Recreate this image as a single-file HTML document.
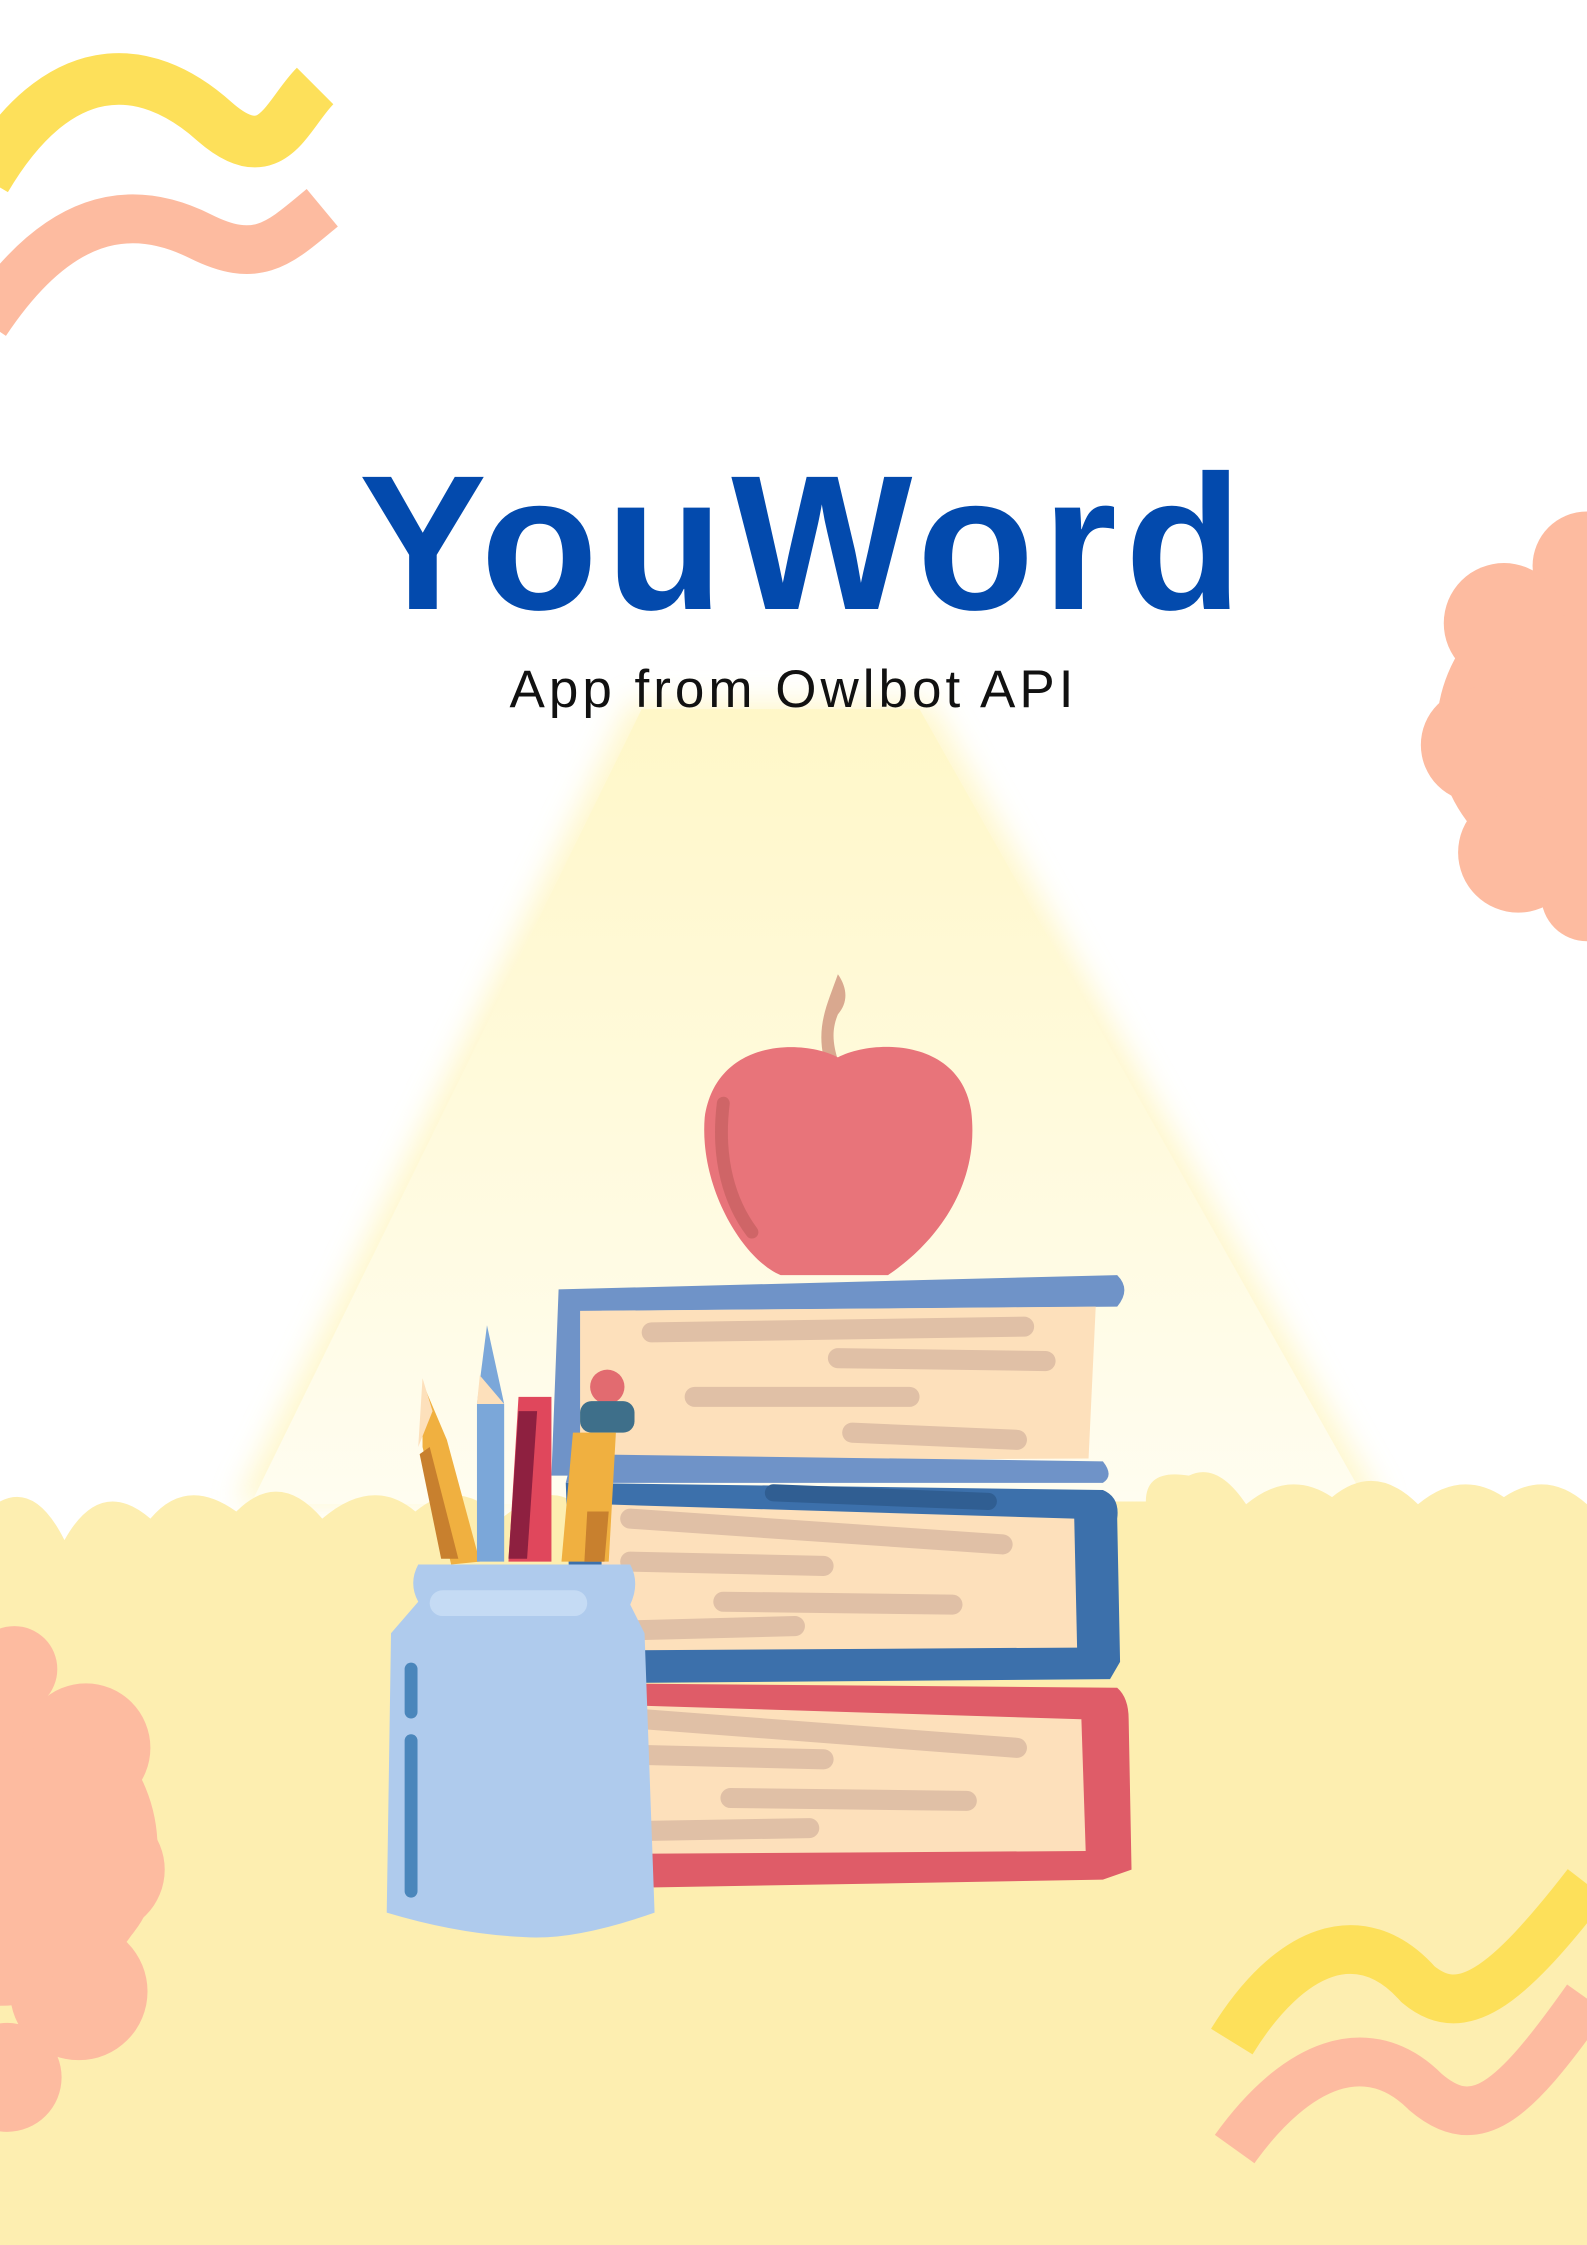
<!DOCTYPE html>
<html><head><meta charset="utf-8"><style>
html,body{margin:0;padding:0;background:#fff}
.wrap{position:relative;width:1587px;height:2245px;overflow:hidden;background:#fff}
svg{position:absolute;left:0;top:0}
.t{position:absolute;left:0;width:1587px;text-align:center;font-family:"Liberation Sans",sans-serif;margin:0;box-sizing:border-box}
.title{top:448px;font-size:192px;font-weight:bold;color:#034aad;letter-spacing:8px;line-height:190px;padding-left:22px}
.sub{top:660px;font-size:53px;color:#111;letter-spacing:4px;line-height:60px}
</style></head><body><div class="wrap">
<svg width="1587" height="2245" viewBox="0 0 1108 1567" preserveAspectRatio="none">
<defs>
<linearGradient id="beam" x1="0" y1="0" x2="0" y2="1">
<stop offset="0" stop-color="#fff7c8"/><stop offset="1" stop-color="#fffdf0"/></linearGradient>
<filter id="bl"><feGaussianBlur stdDeviation="10"/></filter>
</defs>
<polygon points="440,490 650,490 965,1050 165,1050" fill="#fff4b8" filter="url(#bl)" opacity=".7"/>
<polygon points="448,495 642,495 955,1050 175,1050" fill="url(#beam)"/>
<path d="M0,1048 Q25,1035 45,1075 Q70,1030 105,1060 Q130,1030 165,1055 Q195,1025 225,1060 Q260,1030 290,1055 Q320,1030 350,1060 Q380,1035 400,1048 L800,1048 Q800,1025 830,1030 Q850,1020 870,1050 Q900,1025 930,1045 Q960,1020 990,1050 Q1020,1025 1050,1045 Q1080,1025 1108,1050 L1108,1567 L0,1567Z" fill="#fdeeb0"/>
<path d="M-10,125 C40,40 100,40 150,85 C190,120 200,80 220,60" fill="none" stroke="#fde05a" stroke-width="36"/>
<path d="M-10,225 C40,150 90,140 140,165 C180,185 195,170 225,145" fill="none" stroke="#fdbba0" stroke-width="34"/>
<path d="M860,1425 C900,1360 950,1340 990,1385 C1020,1410 1050,1390 1108,1315" fill="none" stroke="#fde05a" stroke-width="34"/>
<path d="M862,1500 C905,1440 955,1420 995,1460 C1030,1490 1055,1470 1108,1395" fill="none" stroke="#fdbba0" stroke-width="34"/>
<g fill="#fdbba0">
<circle cx="1108" cy="510" r="105"/>
<circle cx="1108" cy="395" r="38"/><circle cx="1050" cy="435" r="42"/><circle cx="1032" cy="520" r="40"/><circle cx="1060" cy="595" r="42"/><circle cx="1108" cy="625" r="32"/>
<circle cx="0" cy="1290" r="110"/>
<circle cx="10" cy="1165" r="30"/><circle cx="60" cy="1220" r="45"/><circle cx="70" cy="1305" r="45"/><circle cx="55" cy="1390" r="48"/><circle cx="5" cy="1450" r="38"/>
<circle cx="30" cy="1300" r="80"/>
</g>
<path d="M575,738 C570,715 578,700 585,680 C592,690 592,700 585,708 C580,720 582,730 585,740Z" fill="#d9a88f"/>
<path d="M585,738 C560,725 500,725 492,780 C488,830 520,880 545,890 L620,890 C650,870 685,830 678,775 C670,725 610,725 585,738Z" fill="#e8747a"/>
<path d="M505,770 C500,810 510,840 525,860" stroke="#c46060" stroke-width="9" fill="none" stroke-linecap="round" opacity=".7"/>
<path d="M390,900 L780,890 Q790,900 780,912 L420,915 L400,1030 L385,1030Z" fill="#6f93c8"/>
<path d="M405,915 L765,912 L760,1018 L405,1020Z" fill="#fde0bb"/>
<path d="M400,1015 L770,1020 Q778,1030 770,1035 L395,1035Z" fill="#6f93c8"/>
<g stroke="#e0c0a6" stroke-width="14" stroke-linecap="round">
<line x1="455" y1="930" x2="715" y2="926"/><line x1="585" y1="948" x2="730" y2="950"/><line x1="485" y1="975" x2="635" y2="975"/><line x1="595" y1="1000" x2="710" y2="1005"/>
</g>
<path d="M395,1035 L770,1040 Q782,1045 780,1060 L782,1160 L775,1172 L400,1175Z" fill="#3c70ab"/>
<path d="M420,1050 L750,1060 L752,1150 L420,1152Z" fill="#fde0bb"/>
<line x1="540" y1="1042" x2="690" y2="1048" stroke="#305e92" stroke-width="12" stroke-linecap="round"/>
<g stroke="#e0c0a6" stroke-width="14" stroke-linecap="round">
<line x1="440" y1="1060" x2="700" y2="1078"/><line x1="440" y1="1090" x2="575" y2="1093"/><line x1="505" y1="1118" x2="665" y2="1120"/><line x1="440" y1="1138" x2="555" y2="1135"/>
</g>
<path d="M420,1175 L780,1178 Q788,1185 788,1200 L790,1305 L770,1312 L420,1318Z" fill="#df5c68"/>
<path d="M430,1190 L755,1200 L758,1292 L430,1294Z" fill="#fde0bb"/>
<g stroke="#e0c0a6" stroke-width="14" stroke-linecap="round">
<line x1="450" y1="1200" x2="710" y2="1220"/><line x1="450" y1="1225" x2="575" y2="1228"/><line x1="510" y1="1255" x2="675" y2="1257"/><line x1="450" y1="1278" x2="565" y2="1276"/>
</g>
<path d="M295,965 L312,1005 L335,1090 L315,1092 L295,1010Z" fill="#f0b040"/>
<path d="M295,962 L302,985 L292,1010Z" fill="#fde0bb"/>
<path d="M300,1010 L320,1088 L308,1088 L293,1015Z" fill="#c8802e"/>
<path d="M340,925 L352,980 L352,1090 L333,1090 L333,980Z" fill="#7ba7d9"/>
<path d="M335,960 L352,980 L333,980Z" fill="#fde0bb"/>
<path d="M362,975 L385,975 L385,1090 L355,1090Z" fill="#e0475c"/>
<path d="M362,985 L375,985 L368,1088 L355,1088Z" fill="#8e2040"/>
<circle cx="424" cy="968" r="12" fill="#e26b70"/>
<rect x="405" y="978" width="38" height="22" rx="8" fill="#3e6f8a"/>
<path d="M400,1000 L430,1000 L425,1090 L392,1090Z" fill="#f0b040"/>
<path d="M410,1055 L425,1055 L422,1090 L408,1090Z" fill="#c8802e"/>
<path d="M292,1092 L440,1092 Q447,1105 440,1120 L450,1140 L457,1335 Q400,1355 365,1352 Q320,1350 270,1335 L273,1140 L292,1118 Q285,1105 292,1092Z" fill="#afcbed"/>
<rect x="300" y="1110" width="110" height="18" rx="9" fill="#c5dbf4"/>
<line x1="287" y1="1165" x2="287" y2="1195" stroke="#4a86bb" stroke-width="9" stroke-linecap="round"/>
<line x1="287" y1="1215" x2="287" y2="1320" stroke="#4a86bb" stroke-width="9" stroke-linecap="round"/>
</svg>
<div class="t title">YouWord</div>
<div class="t sub">App from Owlbot API</div>
</div></body></html>
